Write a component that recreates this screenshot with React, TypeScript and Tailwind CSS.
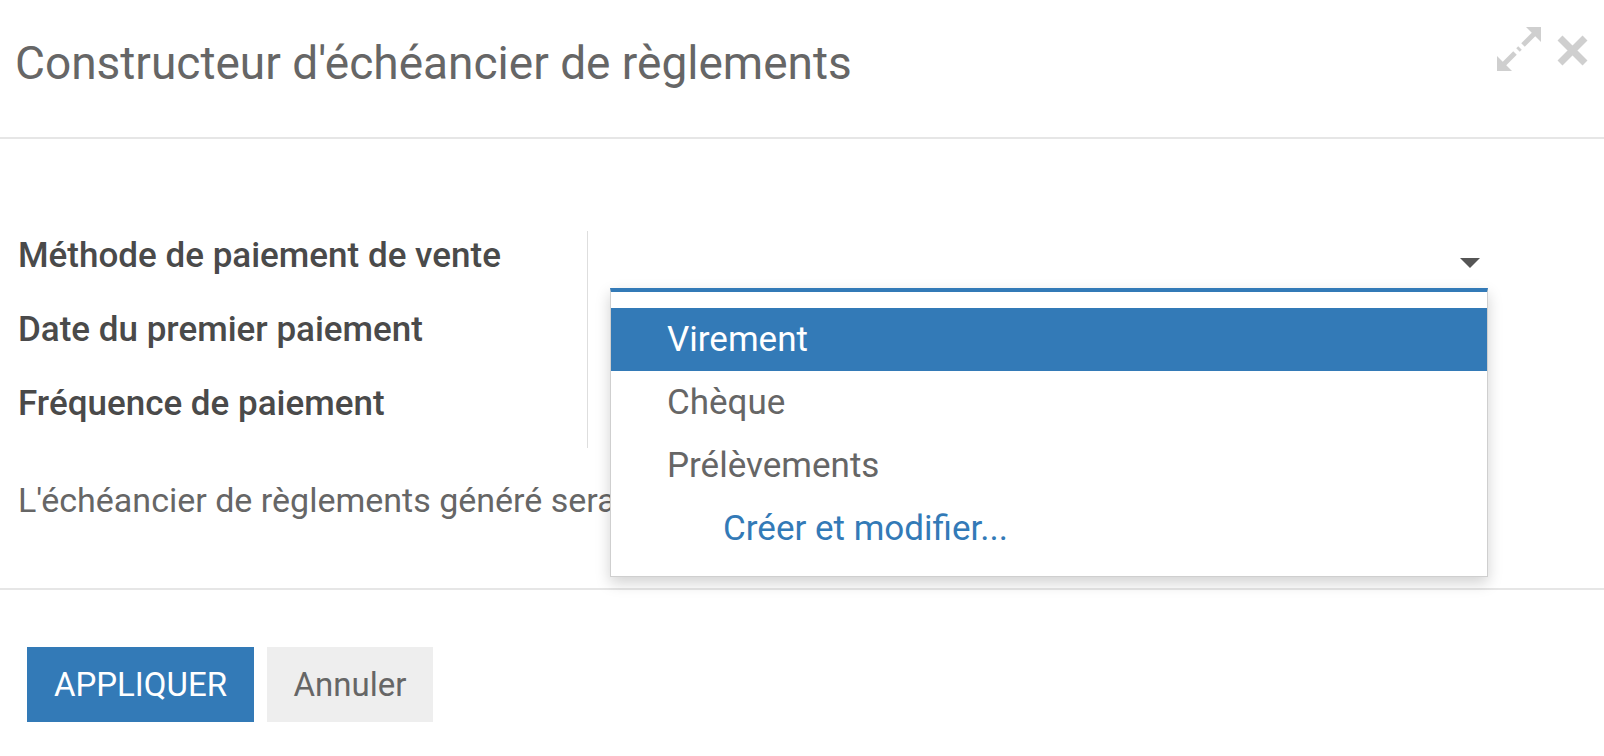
export default function App() {
  const options = ['Virement', 'Chèque', 'Prélèvements'];

  return (
    <div className="w-full h-[756px] bg-white overflow-hidden font-['Roboto',sans-serif]">

      {/* Header */}
      <header className="h-[139px] border-b-2 border-[#e6e6e6] flex justify-between items-start pl-[15px] pr-[15px]">
        <h1 className="pt-[40px] text-[46px] leading-none font-normal text-[#666]">
          Constructeur d'échéancier de règlements
        </h1>
        <div className="flex items-start gap-[15px] pt-[27px]">
          <svg width="44" height="44" viewBox="0 0 44 44" fill="#cfcfcf">
            <polygon points="44,0 44,15 29,0" />
            <polygon points="0,44 0,29 15,44" />
            <line x1="38" y1="6" x2="26" y2="18" stroke="#cfcfcf" strokeWidth="5" />
            <line x1="23" y1="21" x2="21" y2="23" stroke="#cfcfcf" strokeWidth="5" />
            <line x1="6" y1="38" x2="18" y2="26" stroke="#cfcfcf" strokeWidth="5" />
          </svg>
          <svg width="33" height="33" viewBox="0 0 33 33" className="mt-[7px]">
            <path d="M4 4 L29 29 M29 4 L4 29" stroke="#cfcfcf" strokeWidth="7" />
          </svg>
        </div>
      </header>

      {/* Body */}
      <main className="h-[449px] px-[18px] pt-[92px]">
        <div className="flex">
          <div className="w-[570px] border-r border-[#dedede] text-[35px] font-medium leading-none text-[#4a4a4a]">
            <div className="h-[74px] pt-[7px]">Méthode de paiement de vente</div>
            <div className="h-[74px] pt-[7px]">Date du premier paiement</div>
            <div className="h-[69px] pt-[7px]">Fréquence de paiement</div>
          </div>

          <div className="relative flex-1">
            <div className="ml-[22px] w-[878px] h-[57px] flex items-end justify-end pb-[20px] pr-[8px]">
              <svg width="20" height="10" viewBox="0 0 20 10">
                <polygon points="0,0 20,0 10,10" fill="#555" />
              </svg>
            </div>

            {/* Dropdown menu */}
            <div className="absolute left-[22px] top-[57px] w-[878px] bg-white border border-[#cfcfcf] border-t-4 border-t-[#337ab7] py-[16px] shadow-[0_6px_14px_rgba(0,0,0,0.18)]">
              {options.map((o, i) => (
                <div
                  key={o}
                  className={
                    i === 0
                      ? 'h-[63px] leading-[63px] pl-[56px] text-[35px] bg-[#337ab7] text-white'
                      : 'h-[63px] leading-[63px] pl-[56px] text-[35px] text-[#666]'
                  }
                >
                  {o}
                </div>
              ))}
              <div className="h-[63px] leading-[63px] pl-[112px] text-[35px] text-[#337ab7]">
                Créer et modifier...
              </div>
            </div>
          </div>
        </div>

        <p className="mt-[30px] w-[592px] whitespace-nowrap overflow-hidden text-[34px] leading-[1.3] text-[#666]">
          L'échéancier de règlements généré sera ajouté
        </p>
      </main>

      {/* Footer */}
      <footer className="border-t-2 border-[#e6e6e6] px-[27px] pt-[57px] flex gap-[13px]">
        <button className="w-[227px] h-[75px] bg-[#337ab7] text-white text-[33px] uppercase">
          Appliquer
        </button>
        <button className="w-[166px] h-[75px] bg-[#eeeeee] text-[#666] text-[33px]">
          Annuler
        </button>
      </footer>

    </div>
  );
}
